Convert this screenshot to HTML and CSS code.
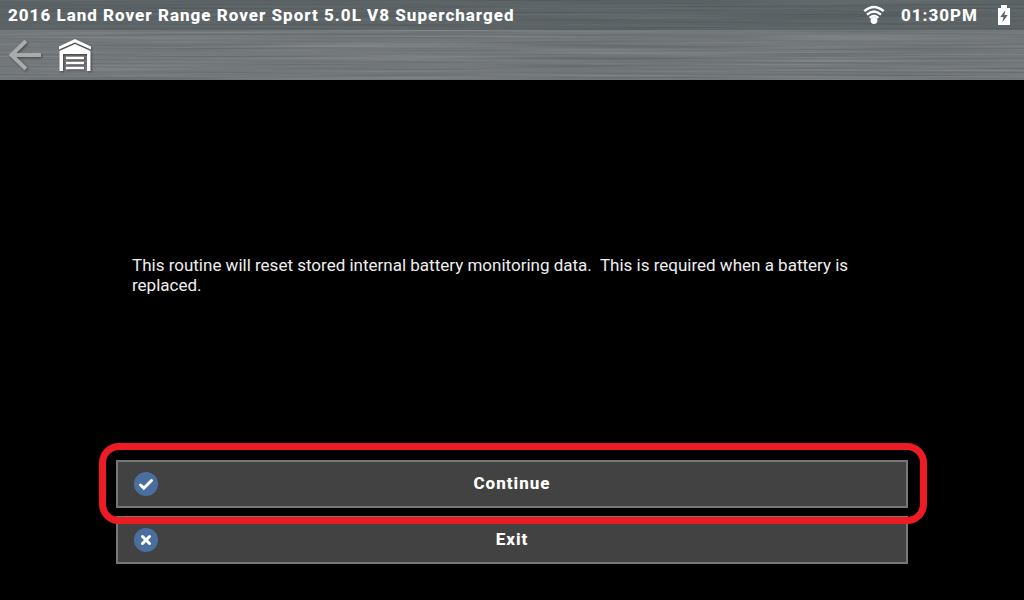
FILE: index.html
```html
<!DOCTYPE html>
<html lang="en">
<head>
  <meta charset="UTF-8">
  <meta name="viewport" content="width=device-width, initial-scale=1.0">
  <title>Battery Monitoring Reset</title>
  <link rel="stylesheet" href="styles.css">
</head>
<body>
  <header class="header">
    <!-- Brushed metal texture -->
    <svg class="metal" aria-hidden="true">
      <filter id="brushed" x="0" y="0" width="100%" height="100%" color-interpolation-filters="sRGB">
        <feTurbulence type="fractalNoise" baseFrequency="0.004 0.5" numOctaves="2" seed="4"/>
        <feColorMatrix values="0.17 0 0 0 0.365  0.17 0 0 0 0.383  0.17 0 0 0 0.393  0 0 0 0 1"/>
      </filter>
      <rect width="100%" height="100%" filter="url(#brushed)"/>
    </svg>

    <div class="status-bar">
      <div class="vehicle">2016 Land Rover Range Rover Sport 5.0L V8 Supercharged</div>
      <svg class="wifi" width="22" height="20" viewBox="0 0 22 20" role="img" aria-label="Wi-Fi">
        <g fill="none" stroke="#fff" stroke-width="2.4">
          <path d="M1.3 6.2Q11-2.2 20.7 6.2"/>
          <path d="M4 9.6Q11 3.2 18 9.6"/>
          <path d="M6.7 12.8Q11 8.4 15.3 12.8"/>
        </g>
        <circle cx="11" cy="15.5" r="3.4" fill="#fff"/>
      </svg>
      <div class="clock">01:30PM</div>
      <svg class="battery" width="12" height="20" viewBox="0 0 12 20" role="img" aria-label="Battery charging">
        <path fill="#fff" d="M3 0h6v3h3v17H0V3h3z"/>
        <path fill="#5f6668" d="M7.3 5.2L2.2 12h3.2l-1 5.200L9.800 10H6.500z"/>
      </svg>
    </div>

    <nav class="toolbar">
      <button class="tool back" aria-label="Back">
        <svg width="34" height="34" viewBox="0 0 34 34">
          <path d="M18 3L3.5 17L18 31M4 17H33" fill="none" stroke="#a8abac" stroke-width="4"/>
        </svg>
      </button>
      <button class="tool home" aria-label="Garage">
        <svg width="34" height="34" viewBox="0 0 34 34">
          <path d="M1 11.5V8.5L17 1L33 8.5V11.5L17 4.5Z" fill="#fff"/>
          <path d="M1.5 13L17 6L32.5 13V33H29V16H5V33H1.5Z" fill="#fff"/>
          <path d="M8 20H26M8 25H26M8 30H26" stroke="#fff" stroke-width="2.4"/>
        </svg>
      </button>
    </nav>
  </header>

  <main class="content">
    <p class="message">This routine will reset stored internal battery monitoring data.&nbsp; This is required when a battery is replaced.</p>

    <div class="actions">
      <button class="action highlighted">
        <svg class="action-icon" width="24" height="24" viewBox="0 0 24 24">
          <circle cx="12" cy="12" r="12" fill="#4a6f9f"/>
          <path d="M6.5 13L9.8 16.2L17.5 8.5" fill="none" stroke="#fff" stroke-width="3" stroke-linecap="round"/>
        </svg>
        Continue
      </button>
      <button class="action">
        <svg class="action-icon" width="24" height="24" viewBox="0 0 24 24">
          <circle cx="12" cy="12" r="12" fill="#4a6f9f"/>
          <path d="M8.5 8.5L15.5 15.5M15.5 8.5L8.5 15.5" fill="none" stroke="#fff" stroke-width="3" stroke-linecap="round"/>
        </svg>
        Exit
      </button>
    </div>
  </main>
</body>
</html>
```
FILE: styles.css
```css
* {
  box-sizing: border-box;
}

body {
  font-family: Roboto, "Liberation Sans", sans-serif;
  margin: 0;
  min-height: 100vh;
  display: flex;
  flex-direction: column;
  background: #000;
  color: #fff;
}

.header {
  position: relative;
}

.metal {
  position: absolute;
  inset: 0;
  width: 100%;
  height: 100%;
}

.status-bar {
  position: relative;
  display: flex;
  align-items: center;
  height: 30px;
  padding: 0 14px 0 8px;
  background: rgba(60, 70, 72, 0.4);
  font-size: 17px;
  font-weight: 800;
  letter-spacing: 1px;
}

.vehicle {
  flex: 1;
}

.clock {
  margin: 0 20px 0 16px;
}

.toolbar {
  position: relative;
  display: flex;
  align-items: center;
  gap: 16px;
  height: 50px;
  padding: 0 8px;
}

.tool {
  display: flex;
  padding: 0;
  border: none;
  background: none;
  cursor: pointer;
}

.tool svg {
  filter: drop-shadow(1px 1px 1px #444);
}

.content {
  flex: 1;
  display: flex;
  flex-direction: column;
  padding: 10px 116px 36px;
}

.message {
  margin: auto 16px;
  font-size: 17px;
  line-height: 20px;
  color: #eee;
}

.actions {
  display: flex;
  flex-direction: column;
  gap: 8px;
}

.action {
  position: relative;
  height: 48px;
  padding: 0 0 2px;
  border: 2px solid #777;
  background: #424242;
  color: #fff;
  font-family: inherit;
  font-size: 17px;
  font-weight: 800;
  letter-spacing: 1px;
  cursor: pointer;
}

.action-icon {
  position: absolute;
  left: 16px;
  top: 10px;
}

/* Red ring around the recommended choice */
.highlighted {
  z-index: 1;
}

.highlighted::after {
  content: "";
  position: absolute;
  inset: -19px -21px -18px -19px;
  border: 7px solid #ed1c24;
  border-radius: 20px;
  pointer-events: none;
}
```
